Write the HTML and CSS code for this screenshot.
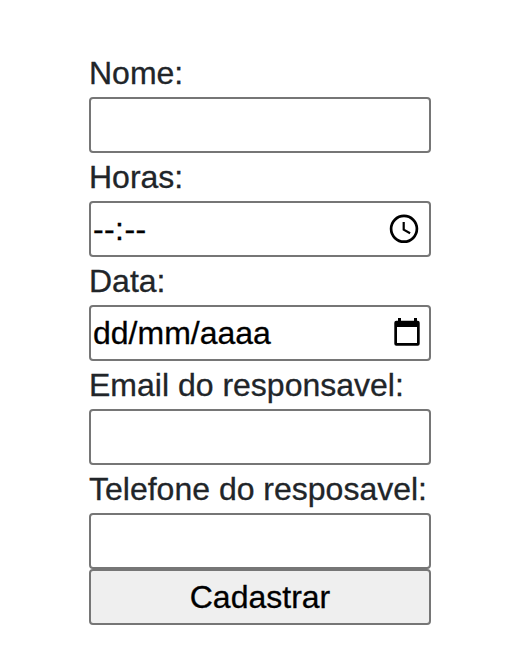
FILE: index.html
```html
<!DOCTYPE html>
<html lang="pt-BR">
<head>
<meta charset="utf-8">
<title>Cadastro</title>
<link rel="stylesheet" href="styles.css">
</head>
<body>
<form class="form">
  <label class="label">Nome:</label>
  <div class="field"></div>
  <label class="label">Horas:</label>
  <div class="field"><span class="value time">--:--</span>
    <svg class="clock" width="30" height="30" viewBox="0 0 30 30"><circle cx="15" cy="14.800" r="12.900"/><path d="M14.700 8v7.700l6.400 3.500"/></svg>
  </div>
  <label class="label">Data:</label>
  <div class="field"><span class="value">dd/mm/aaaa</span>
    <svg class="calendar" width="26" height="30" viewBox="0 0 26 30"><path fill-rule="evenodd" d="M4 0h3v2.700h13V0h3v2.700h.7a2 2 0 0 1 2 2V25.700a2 2 0 0 1-2 2H2.300a2 2 0 0 1-2-2V4.700a2 2 0 0 1 2-2H4zM3 9v16h20V9z"/></svg>
  </div>
  <label class="label">Email do responsavel:</label>
  <div class="field"></div>
  <label class="label">Telefone do resposavel:</label>
  <div class="field"></div>
  <button class="button" type="button">Cadastrar</button>
</form>
</body>
</html>
```

FILE: styles.css
```css
* { box-sizing: border-box; }
body { margin: 0; background: #fff; font-family: "Liberation Sans", Arial, sans-serif; font-size: 32px; color: #212529; -webkit-text-stroke: 0.3px; }
.form { width: 342px; margin: 49px 0 0 89px; }
.label { display: block; height: 48px; line-height: 48px; white-space: nowrap; }
.field { display: flex; align-items: center; justify-content: space-between; height: 56px; padding: 0 2px; border: 2px solid #767676; border-radius: 4px; color: #000; }
.value { line-height: 52px; }
.time { letter-spacing: 0.4px; }
.clock { margin-right: 8px; fill: none; stroke: #000; stroke-width: 2.7; }
.clock path { stroke-width: 2.2; }
.calendar { margin-right: 7px; fill: #000; }
.button { display: block; width: 100%; height: 56px; padding: 0; border: 2px solid #767676; border-radius: 4px; background: #efefef; font: inherit; color: #000; }
```
